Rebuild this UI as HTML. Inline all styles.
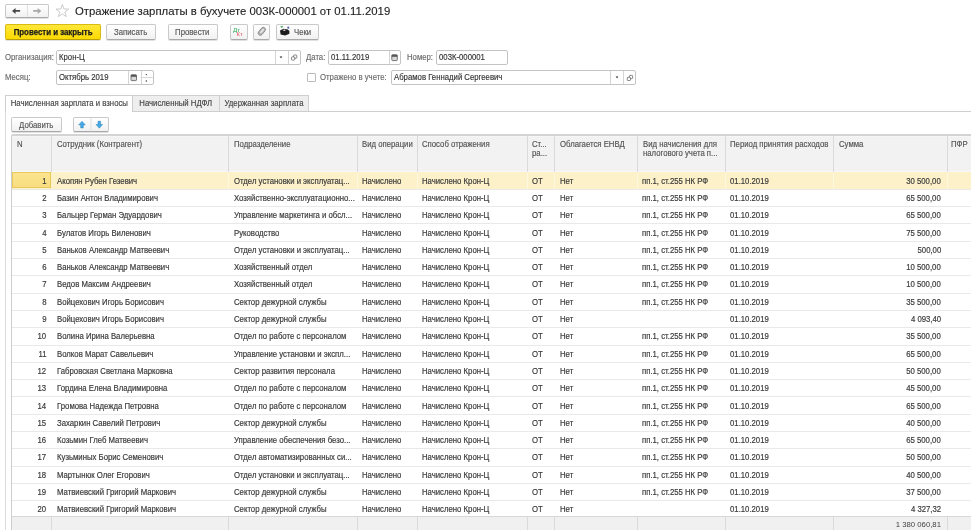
<!DOCTYPE html>
<html><head><meta charset="utf-8">
<style>
*{box-sizing:border-box;margin:0;padding:0}
html,body{width:971px;height:530px;overflow:hidden;background:#fff}
body{position:relative;font-family:"Liberation Sans",sans-serif;font-size:7.75px;color:#333}
.a{position:absolute;white-space:nowrap}
.btn{position:absolute;border:1px solid #c9c9c9;border-bottom-color:#a9a9a9;border-radius:2px;background:linear-gradient(#fff,#f1f1f1);box-shadow:0 1px 0 rgba(0,0,0,.12);color:#555;text-align:center}
.lbl{position:absolute;color:#6b6b6b;white-space:nowrap}
.inp{position:absolute;border:1px solid #c4c4c4;border-radius:2px;background:#fff;color:#333}
.inp .t{position:absolute;left:2px;white-space:nowrap}
.dv{position:absolute;top:0;bottom:0;width:1px;background:#d4d4d4}
.tab{position:absolute;border:1px solid #cfcfcf;border-bottom:none;background:#eeeeee;color:#444;text-align:center}
.row{left:11px;width:960px}
.row .c{top:0.85px;line-height:17px;color:#3a3a3a;font-size:8.25px;transform:scaleX(0.94);transform-origin:0 0;-webkit-text-stroke:0.18px #3a3a3a}
.row .r{transform-origin:100% 0}
.hd{color:#525252}
.s{display:inline-block;font-size:8.25px;transform:scaleX(.94);-webkit-text-stroke-width:0.15px}
.btn .s{position:relative;top:0.6px}
.l{transform-origin:0 50%}

</style></head><body><div id="root" style="position:absolute;left:0;top:0;width:971px;height:530px;will-change:transform">

<!-- nav -->
<div class="btn" style="left:5px;top:3.5px;width:44px;height:14.5px;border-radius:2px"></div>
<div class="a" style="left:27px;top:4.5px;width:1px;height:12.5px;background:#e0e0e0"></div>
<svg class="a" style="left:0;top:0" width="80" height="20" viewBox="0 0 80 20">
<path d="M12 10.9 L15.6 7.9 L15.6 10 L20.1 10 L20.1 11.8 L15.6 11.8 L15.6 13.9 Z" fill="#484848"/>
<path d="M41.3 10.9 L37.7 7.9 L37.7 10 L33.2 10 L33.2 11.8 L37.7 11.8 L37.7 13.9 Z" fill="#a8a8a8"/>
<path d="M62.3 4.5 L63.88 8.95 L68.66 9.12 L64.88 12.01 L66.23 16.6 L62.3 13.9 L58.37 16.6 L59.72 12.01 L55.94 9.12 L60.72 8.95 Z" fill="none" stroke="#c4c4c4" stroke-width="0.9" stroke-linejoin="round"/>
</svg>
<div class="a" style="left:75px;top:3.8px;font-size:11.35px;line-height:14px;color:#1e1e1e;-webkit-text-stroke:0.12px #1e1e1e">Отражение зарплаты в бухучете 003К-000001 от 01.11.2019</div>

<!-- toolbar -->
<div class="a" style="left:5px;top:24px;width:96px;height:15.5px;border:1px solid #d8ba10;border-bottom-color:#bba000;border-radius:2px;background:linear-gradient(#ffe73a,#fcda00);box-shadow:0 1px 0 rgba(0,0,0,.12);font-weight:bold;font-size:7.9px;color:#1a1a1a;text-align:center;line-height:14px"><span style="display:inline-block;font-size:8.6px;transform:scaleX(.915);position:relative;top:0.3px;-webkit-text-stroke:0.25px #1a1a1a">Провести и закрыть</span></div>
<div class="btn" style="left:106px;top:24px;width:49.5px;height:15.5px;line-height:14px"><span class="s">Записать</span></div>
<div class="btn" style="left:167.5px;top:24px;width:50px;height:15.5px;line-height:14px"><span class="s">Провести</span></div>
<div class="btn" style="left:229.5px;top:24px;width:18px;height:15.5px"></div>
<svg class="a" style="left:226px;top:22px" width="22" height="18" viewBox="226 22 22 18"><text x="233" y="31.7" font-family="Liberation Sans" font-size="6" fill="#2aa84e" textLength="7" lengthAdjust="spacingAndGlyphs">Дт</text><text x="236.6" y="36.3" font-family="Liberation Sans" font-size="5.8" fill="#e0505c" textLength="6.2" lengthAdjust="spacingAndGlyphs">Кт</text></svg>
<div class="btn" style="left:253.2px;top:24px;width:17.3px;height:15.5px"></div>
<svg class="a" style="left:250px;top:22px" width="24" height="18" viewBox="250 22 24 18"><g transform="rotate(40 261.8 31.3)"><rect x="259.6" y="26.8" width="4.4" height="9" rx="2.2" fill="#b4b4b4" stroke="#8e8e8e" stroke-width="0.9"/><rect x="260.9" y="28.2" width="1.8" height="5.2" rx="0.9" fill="#e6e6e6"/></g></svg>
<div class="btn" style="left:276.2px;top:24px;width:43px;height:15.5px;line-height:14px;text-align:left;padding-left:17px"><span class="s l">Чеки</span></div>
<svg class="a" style="left:274px;top:22px" width="20" height="18" viewBox="274 22 20 18"><path d="M280 30.6 L283.6 28.8 L287.8 29.4 L289.4 31 L289.4 33.8 L285.2 35.6 L280.6 34.6 Z" fill="#1c1c1c"/><path d="M282.8 30.1 L284.6 29.6 L285.8 30.3 L284 30.9Z" fill="#f0f0f0"/><path d="M280.2 26.3 L283.4 26.3 L281.8 28.1Z" fill="#2a9a48"/><circle cx="288.3" cy="27.7" r="1.1" fill="#5a63b0"/></svg>

<!-- row1 -->
<div class="lbl" style="left:5px;top:50px;line-height:15px"><span class="s l">Организация:</span></div>
<div class="inp" style="left:56px;top:50px;width:245px;height:15px">
  <div class="t" style="line-height:13px"><span class="s l">Крон-Ц</span></div>
  <div class="dv" style="left:218px"></div>
  <div class="dv" style="left:230.5px"></div>
</div>
<div class="lbl" style="left:306px;top:50px;line-height:15px"><span class="s l">Дата:</span></div>
<div class="inp" style="left:328px;top:50px;width:73px;height:15px">
  <div class="t" style="line-height:13px"><span class="s l">01.11.2019</span></div>
  <div class="dv" style="left:59.5px"></div>
</div>
<div class="lbl" style="left:407px;top:50px;line-height:15px"><span class="s l">Номер:</span></div>
<div class="inp" style="left:436px;top:50px;width:72px;height:15px">
  <div class="t" style="line-height:13px"><span class="s l">003К-000001</span></div>
</div>

<!-- row2 -->
<div class="lbl" style="left:5px;top:70px;line-height:15px"><span class="s l">Месяц:</span></div>
<div class="inp" style="left:56px;top:70px;width:98px;height:15px">
  <div class="t" style="line-height:13px"><span class="s l">Октябрь 2019</span></div>
  <div class="dv" style="left:70.5px"></div>
  <div class="dv" style="left:83.5px"></div>
</div>
<div class="a" style="left:307px;top:73px;width:9px;height:9px;border:1px solid #bbb;border-radius:1px;background:#fff"></div>
<div class="lbl" style="left:320px;top:70px;line-height:15px"><span class="s l">Отражено в учете:</span></div>
<div class="inp" style="left:391px;top:70px;width:245px;height:15px">
  <div class="t" style="line-height:13px"><span class="s l">Абрамов Геннадий Сергеевич</span></div>
  <div class="dv" style="left:218px"></div>
  <div class="dv" style="left:231px"></div>
</div>


<svg class="a" style="left:0;top:40px" width="971" height="50" viewBox="0 40 971 50">
<path d="M279.6 56.4 L282.4 56.4 L281 58.2Z" fill="#222"/>
<path d="M615.6 76.4 L618.4 76.4 L617 78.2Z" fill="#222"/>
<g fill="#fff" stroke="#666" stroke-width="0.8">
<rect x="293.6" y="55.0" width="3.2" height="3.2" rx="0.7"/><rect x="291.5" y="56.9" width="3.2" height="3.2" rx="0.7"/>
<rect x="629.4" y="75.4" width="3.2" height="3.2" rx="0.7"/><rect x="627.3" y="77.3" width="3.2" height="3.2" rx="0.7"/>
</g>
<g>
<rect x="131" y="74.8" width="5.5" height="5.8" rx="0.8" fill="#d8d8d8" stroke="#555" stroke-width="0.8"/><rect x="131" y="74.8" width="5.5" height="2" fill="#555"/>
<rect x="391.8" y="54.8" width="5.5" height="5.8" rx="0.8" fill="#d8d8d8" stroke="#555" stroke-width="0.8"/><rect x="391.8" y="54.8" width="5.5" height="2" fill="#555"/>
</g>
<circle cx="146.3" cy="74.6" r="0.7" fill="#333"/><circle cx="146.3" cy="81" r="0.7" fill="#333"/>
<rect x="140.5" y="77.2" width="12.2" height="0.8" fill="#d0d0d0"/>
</svg>


<!-- tabs -->
<div class="a" style="left:5px;top:111px;width:966px;height:1px;background:#cfcfcf"></div>
<div class="a" style="left:4.5px;top:111px;width:1.5px;height:419px;background:#dcdcdc"></div>
<div class="tab" style="left:5px;top:95px;width:128px;height:17px;background:#fff;line-height:16px;color:#444"><span class="s">Начисленная зарплата и взносы</span></div>
<div class="tab" style="left:133px;top:95px;width:87px;height:16px;line-height:16px;border-left:none"><span class="s">Начисленный НДФЛ</span></div>
<div class="tab" style="left:219px;top:95px;width:90px;height:16px;line-height:16px"><span class="s">Удержанная зарплата</span></div>

<div class="btn" style="left:11px;top:117px;width:51px;height:15px;line-height:13px"><span class="s">Добавить</span></div>
<div class="btn" style="left:73px;top:117px;width:36px;height:15px"></div>

<svg class="a" style="left:0;top:110px" width="120" height="30" viewBox="0 110 120 30">
<path d="M82 121.3 L85.3 124.9 L83.3 124.9 L83.3 127.9 L80.7 127.9 L80.7 124.9 L78.7 124.9Z" fill="#45a8e3" stroke="#2c86bd" stroke-width="0.5" stroke-linejoin="round"/>
<path d="M99.3 128.2 L102.6 124.5 L100.6 124.5 L100.6 121.2 L98 121.2 L98 124.5 L96 124.5Z" fill="#45a8e3" stroke="#2c86bd" stroke-width="0.5" stroke-linejoin="round"/>
<rect x="90.5" y="117.8" width="1" height="13.6" fill="#e0e0e0"/>
</svg>
<!--TBL-->
<div class="a" style="left:11px;top:134px;width:960px;height:37.80000000000001px;background:#f2f2f2;border-top:2px solid #d3d3d3;border-left:1px solid #cdcdcd;border-top-left-radius:2px"></div>
<div class="a" style="left:12px;top:136px;width:959px;height:1px;background:#f6f6f6"></div>
<div class="a" style="left:12px;top:170.8px;width:959px;height:1px;background:#f8f8f8"></div>
<div class="a" style="left:51px;top:136px;width:1px;height:35.80000000000001px;background:#dadada"></div>
<div class="a" style="left:228px;top:136px;width:1px;height:35.80000000000001px;background:#dadada"></div>
<div class="a" style="left:357px;top:136px;width:1px;height:35.80000000000001px;background:#dadada"></div>
<div class="a" style="left:417px;top:136px;width:1px;height:35.80000000000001px;background:#dadada"></div>
<div class="a" style="left:527px;top:136px;width:1px;height:35.80000000000001px;background:#dadada"></div>
<div class="a" style="left:554px;top:136px;width:1px;height:35.80000000000001px;background:#dadada"></div>
<div class="a" style="left:637px;top:136px;width:1px;height:35.80000000000001px;background:#dadada"></div>
<div class="a" style="left:725px;top:136px;width:1px;height:35.80000000000001px;background:#dadada"></div>
<div class="a" style="left:833px;top:136px;width:1px;height:35.80000000000001px;background:#dadada"></div>
<div class="a" style="left:947px;top:136px;width:1px;height:35.80000000000001px;background:#dadada"></div>
<div class="a hd" style="left:16.8px;top:135px;line-height:9.3px;padding-top:4.8px"><span class="s l">N</span></div>
<div class="a hd" style="left:56.8px;top:135px;line-height:9.3px;padding-top:4.8px"><span class="s l">Сотрудник (Контрагент)</span></div>
<div class="a hd" style="left:233.9px;top:135px;line-height:9.3px;padding-top:4.8px"><span class="s l">Подразделение</span></div>
<div class="a hd" style="left:362.4px;top:135px;line-height:9.3px;padding-top:4.8px"><span class="s l">Вид операции</span></div>
<div class="a hd" style="left:422.4px;top:135px;line-height:9.3px;padding-top:4.8px"><span class="s l">Способ отражения</span></div>
<div class="a hd" style="left:532.1px;top:135px;line-height:9.3px;padding-top:4.8px"><span class="s l">Ст...<br>ра...</span></div>
<div class="a hd" style="left:559.8px;top:135px;line-height:9.3px;padding-top:4.8px"><span class="s l">Облагается ЕНВД</span></div>
<div class="a hd" style="left:642.6px;top:135px;line-height:9.3px;padding-top:4.8px"><span class="s l">Вид начисления для<br>налогового учета п...</span></div>
<div class="a hd" style="left:730.4px;top:135px;line-height:9.3px;padding-top:4.8px"><span class="s l">Период принятия расходов</span></div>
<div class="a hd" style="left:838.6px;top:135px;line-height:9.3px;padding-top:4.8px"><span class="s l">Сумма</span></div>
<div class="a hd" style="left:951.1px;top:135px;line-height:9.3px;padding-top:4.8px"><span class="s l">ПФР</span></div>
<div class="a" style="left:12px;top:188.80px;width:959px;height:1px;background:#e9e9e9"></div>
<div class="a row" style="top:171.80px;height:17.3px;background:#fdf1c9">
<div class="a" style="left:0.7px;top:0.6px;width:39.3px;height:15.4px;background:linear-gradient(#fbe48e,#f9dd80);border:1px solid #eac75a"></div>
<div class="a" style="left:217px;top:0;width:1px;height:17.3px;background:#fff8e0"></div>
<div class="a" style="left:346px;top:0;width:1px;height:17.3px;background:#fff8e0"></div>
<div class="a" style="left:406px;top:0;width:1px;height:17.3px;background:#fff8e0"></div>
<div class="a" style="left:516px;top:0;width:1px;height:17.3px;background:#fff8e0"></div>
<div class="a" style="left:543px;top:0;width:1px;height:17.3px;background:#fff8e0"></div>
<div class="a" style="left:626px;top:0;width:1px;height:17.3px;background:#fff8e0"></div>
<div class="a" style="left:714px;top:0;width:1px;height:17.3px;background:#fff8e0"></div>
<div class="a" style="left:822px;top:0;width:1px;height:17.3px;background:#fff8e0"></div>
<div class="a" style="left:936px;top:0;width:1px;height:17.3px;background:#fff8e0"></div>
<div class="a c r" style="right:924.5px;text-align:right">1</div>
<div class="a c" style="left:46.2px">Акопян Рубен Гезевич</div>
<div class="a c" style="left:222.6px">Отдел установки и эксплуатац...</div>
<div class="a c" style="left:351.2px">Начислено</div>
<div class="a c" style="left:411.3px">Начислено Крон-Ц</div>
<div class="a c" style="left:521px">ОТ</div>
<div class="a c" style="left:548.5px">Нет</div>
<div class="a c" style="left:631.2px">пп.1, ст.255 НК РФ</div>
<div class="a c" style="left:719.4px">01.10.2019</div>
<div class="a c r" style="right:30px;text-align:right">30 500,00</div>
</div>
<div class="a" style="left:12px;top:206.10px;width:959px;height:1px;background:#e9e9e9"></div>
<div class="a row" style="top:189.10px;height:17.3px;background:transparent">
<div class="a c r" style="right:924.5px;text-align:right">2</div>
<div class="a c" style="left:46.2px">Базин Антон Владимирович</div>
<div class="a c" style="left:222.6px">Хозяйственно-эксплуатационно...</div>
<div class="a c" style="left:351.2px">Начислено</div>
<div class="a c" style="left:411.3px">Начислено Крон-Ц</div>
<div class="a c" style="left:521px">ОТ</div>
<div class="a c" style="left:548.5px">Нет</div>
<div class="a c" style="left:631.2px">пп.1, ст.255 НК РФ</div>
<div class="a c" style="left:719.4px">01.10.2019</div>
<div class="a c r" style="right:30px;text-align:right">65 500,00</div>
</div>
<div class="a" style="left:12px;top:223.40px;width:959px;height:1px;background:#e9e9e9"></div>
<div class="a row" style="top:206.40px;height:17.3px;background:transparent">
<div class="a c r" style="right:924.5px;text-align:right">3</div>
<div class="a c" style="left:46.2px">Бальцер Герман Эдуардович</div>
<div class="a c" style="left:222.6px">Управление маркетинга и обсл...</div>
<div class="a c" style="left:351.2px">Начислено</div>
<div class="a c" style="left:411.3px">Начислено Крон-Ц</div>
<div class="a c" style="left:521px">ОТ</div>
<div class="a c" style="left:548.5px">Нет</div>
<div class="a c" style="left:631.2px">пп.1, ст.255 НК РФ</div>
<div class="a c" style="left:719.4px">01.10.2019</div>
<div class="a c r" style="right:30px;text-align:right">65 500,00</div>
</div>
<div class="a" style="left:12px;top:240.70px;width:959px;height:1px;background:#e9e9e9"></div>
<div class="a row" style="top:223.70px;height:17.3px;background:transparent">
<div class="a c r" style="right:924.5px;text-align:right">4</div>
<div class="a c" style="left:46.2px">Булатов Игорь Виленович</div>
<div class="a c" style="left:222.6px">Руководство</div>
<div class="a c" style="left:351.2px">Начислено</div>
<div class="a c" style="left:411.3px">Начислено Крон-Ц</div>
<div class="a c" style="left:521px">ОТ</div>
<div class="a c" style="left:548.5px">Нет</div>
<div class="a c" style="left:631.2px">пп.1, ст.255 НК РФ</div>
<div class="a c" style="left:719.4px">01.10.2019</div>
<div class="a c r" style="right:30px;text-align:right">75 500,00</div>
</div>
<div class="a" style="left:12px;top:258.00px;width:959px;height:1px;background:#e9e9e9"></div>
<div class="a row" style="top:241.00px;height:17.3px;background:transparent">
<div class="a c r" style="right:924.5px;text-align:right">5</div>
<div class="a c" style="left:46.2px">Ваньков Александр Матвеевич</div>
<div class="a c" style="left:222.6px">Отдел установки и эксплуатац...</div>
<div class="a c" style="left:351.2px">Начислено</div>
<div class="a c" style="left:411.3px">Начислено Крон-Ц</div>
<div class="a c" style="left:521px">ОТ</div>
<div class="a c" style="left:548.5px">Нет</div>
<div class="a c" style="left:631.2px">пп.1, ст.255 НК РФ</div>
<div class="a c" style="left:719.4px">01.10.2019</div>
<div class="a c r" style="right:30px;text-align:right">500,00</div>
</div>
<div class="a" style="left:12px;top:275.30px;width:959px;height:1px;background:#e9e9e9"></div>
<div class="a row" style="top:258.30px;height:17.3px;background:transparent">
<div class="a c r" style="right:924.5px;text-align:right">6</div>
<div class="a c" style="left:46.2px">Ваньков Александр Матвеевич</div>
<div class="a c" style="left:222.6px">Хозяйственный отдел</div>
<div class="a c" style="left:351.2px">Начислено</div>
<div class="a c" style="left:411.3px">Начислено Крон-Ц</div>
<div class="a c" style="left:521px">ОТ</div>
<div class="a c" style="left:548.5px">Нет</div>
<div class="a c" style="left:631.2px">пп.1, ст.255 НК РФ</div>
<div class="a c" style="left:719.4px">01.10.2019</div>
<div class="a c r" style="right:30px;text-align:right">10 500,00</div>
</div>
<div class="a" style="left:12px;top:292.60px;width:959px;height:1px;background:#e9e9e9"></div>
<div class="a row" style="top:275.60px;height:17.3px;background:transparent">
<div class="a c r" style="right:924.5px;text-align:right">7</div>
<div class="a c" style="left:46.2px">Ведов Максим Андреевич</div>
<div class="a c" style="left:222.6px">Хозяйственный отдел</div>
<div class="a c" style="left:351.2px">Начислено</div>
<div class="a c" style="left:411.3px">Начислено Крон-Ц</div>
<div class="a c" style="left:521px">ОТ</div>
<div class="a c" style="left:548.5px">Нет</div>
<div class="a c" style="left:631.2px">пп.1, ст.255 НК РФ</div>
<div class="a c" style="left:719.4px">01.10.2019</div>
<div class="a c r" style="right:30px;text-align:right">10 500,00</div>
</div>
<div class="a" style="left:12px;top:309.90px;width:959px;height:1px;background:#e9e9e9"></div>
<div class="a row" style="top:292.90px;height:17.3px;background:transparent">
<div class="a c r" style="right:924.5px;text-align:right">8</div>
<div class="a c" style="left:46.2px">Войцехович Игорь Борисович</div>
<div class="a c" style="left:222.6px">Сектор дежурной службы</div>
<div class="a c" style="left:351.2px">Начислено</div>
<div class="a c" style="left:411.3px">Начислено Крон-Ц</div>
<div class="a c" style="left:521px">ОТ</div>
<div class="a c" style="left:548.5px">Нет</div>
<div class="a c" style="left:631.2px">пп.1, ст.255 НК РФ</div>
<div class="a c" style="left:719.4px">01.10.2019</div>
<div class="a c r" style="right:30px;text-align:right">35 500,00</div>
</div>
<div class="a" style="left:12px;top:327.20px;width:959px;height:1px;background:#e9e9e9"></div>
<div class="a row" style="top:310.20px;height:17.3px;background:transparent">
<div class="a c r" style="right:924.5px;text-align:right">9</div>
<div class="a c" style="left:46.2px">Войцехович Игорь Борисович</div>
<div class="a c" style="left:222.6px">Сектор дежурной службы</div>
<div class="a c" style="left:351.2px">Начислено</div>
<div class="a c" style="left:411.3px">Начислено Крон-Ц</div>
<div class="a c" style="left:521px">ОТ</div>
<div class="a c" style="left:548.5px">Нет</div>
<div class="a c" style="left:719.4px">01.10.2019</div>
<div class="a c r" style="right:30px;text-align:right">4 093,40</div>
</div>
<div class="a" style="left:12px;top:344.50px;width:959px;height:1px;background:#e9e9e9"></div>
<div class="a row" style="top:327.50px;height:17.3px;background:transparent">
<div class="a c r" style="right:924.5px;text-align:right">10</div>
<div class="a c" style="left:46.2px">Волина Ирина Валерьевна</div>
<div class="a c" style="left:222.6px">Отдел по работе с персоналом</div>
<div class="a c" style="left:351.2px">Начислено</div>
<div class="a c" style="left:411.3px">Начислено Крон-Ц</div>
<div class="a c" style="left:521px">ОТ</div>
<div class="a c" style="left:548.5px">Нет</div>
<div class="a c" style="left:631.2px">пп.1, ст.255 НК РФ</div>
<div class="a c" style="left:719.4px">01.10.2019</div>
<div class="a c r" style="right:30px;text-align:right">35 500,00</div>
</div>
<div class="a" style="left:12px;top:361.80px;width:959px;height:1px;background:#e9e9e9"></div>
<div class="a row" style="top:344.80px;height:17.3px;background:transparent">
<div class="a c r" style="right:924.5px;text-align:right">11</div>
<div class="a c" style="left:46.2px">Волков Марат Савельевич</div>
<div class="a c" style="left:222.6px">Управление установки и экспл...</div>
<div class="a c" style="left:351.2px">Начислено</div>
<div class="a c" style="left:411.3px">Начислено Крон-Ц</div>
<div class="a c" style="left:521px">ОТ</div>
<div class="a c" style="left:548.5px">Нет</div>
<div class="a c" style="left:631.2px">пп.1, ст.255 НК РФ</div>
<div class="a c" style="left:719.4px">01.10.2019</div>
<div class="a c r" style="right:30px;text-align:right">65 500,00</div>
</div>
<div class="a" style="left:12px;top:379.10px;width:959px;height:1px;background:#e9e9e9"></div>
<div class="a row" style="top:362.10px;height:17.3px;background:transparent">
<div class="a c r" style="right:924.5px;text-align:right">12</div>
<div class="a c" style="left:46.2px">Габровская Светлана Марковна</div>
<div class="a c" style="left:222.6px">Сектор развития персонала</div>
<div class="a c" style="left:351.2px">Начислено</div>
<div class="a c" style="left:411.3px">Начислено Крон-Ц</div>
<div class="a c" style="left:521px">ОТ</div>
<div class="a c" style="left:548.5px">Нет</div>
<div class="a c" style="left:631.2px">пп.1, ст.255 НК РФ</div>
<div class="a c" style="left:719.4px">01.10.2019</div>
<div class="a c r" style="right:30px;text-align:right">50 500,00</div>
</div>
<div class="a" style="left:12px;top:396.40px;width:959px;height:1px;background:#e9e9e9"></div>
<div class="a row" style="top:379.40px;height:17.3px;background:transparent">
<div class="a c r" style="right:924.5px;text-align:right">13</div>
<div class="a c" style="left:46.2px">Гордина Елена Владимировна</div>
<div class="a c" style="left:222.6px">Отдел по работе с персоналом</div>
<div class="a c" style="left:351.2px">Начислено</div>
<div class="a c" style="left:411.3px">Начислено Крон-Ц</div>
<div class="a c" style="left:521px">ОТ</div>
<div class="a c" style="left:548.5px">Нет</div>
<div class="a c" style="left:631.2px">пп.1, ст.255 НК РФ</div>
<div class="a c" style="left:719.4px">01.10.2019</div>
<div class="a c r" style="right:30px;text-align:right">45 500,00</div>
</div>
<div class="a" style="left:12px;top:413.70px;width:959px;height:1px;background:#e9e9e9"></div>
<div class="a row" style="top:396.70px;height:17.3px;background:transparent">
<div class="a c r" style="right:924.5px;text-align:right">14</div>
<div class="a c" style="left:46.2px">Громова Надежда Петровна</div>
<div class="a c" style="left:222.6px">Отдел по работе с персоналом</div>
<div class="a c" style="left:351.2px">Начислено</div>
<div class="a c" style="left:411.3px">Начислено Крон-Ц</div>
<div class="a c" style="left:521px">ОТ</div>
<div class="a c" style="left:548.5px">Нет</div>
<div class="a c" style="left:631.2px">пп.1, ст.255 НК РФ</div>
<div class="a c" style="left:719.4px">01.10.2019</div>
<div class="a c r" style="right:30px;text-align:right">65 500,00</div>
</div>
<div class="a" style="left:12px;top:431.00px;width:959px;height:1px;background:#e9e9e9"></div>
<div class="a row" style="top:414.00px;height:17.3px;background:transparent">
<div class="a c r" style="right:924.5px;text-align:right">15</div>
<div class="a c" style="left:46.2px">Захаркин Савелий Петрович</div>
<div class="a c" style="left:222.6px">Сектор дежурной службы</div>
<div class="a c" style="left:351.2px">Начислено</div>
<div class="a c" style="left:411.3px">Начислено Крон-Ц</div>
<div class="a c" style="left:521px">ОТ</div>
<div class="a c" style="left:548.5px">Нет</div>
<div class="a c" style="left:631.2px">пп.1, ст.255 НК РФ</div>
<div class="a c" style="left:719.4px">01.10.2019</div>
<div class="a c r" style="right:30px;text-align:right">40 500,00</div>
</div>
<div class="a" style="left:12px;top:448.30px;width:959px;height:1px;background:#e9e9e9"></div>
<div class="a row" style="top:431.30px;height:17.3px;background:transparent">
<div class="a c r" style="right:924.5px;text-align:right">16</div>
<div class="a c" style="left:46.2px">Козьмин Глеб Матвеевич</div>
<div class="a c" style="left:222.6px">Управление обеспечения безо...</div>
<div class="a c" style="left:351.2px">Начислено</div>
<div class="a c" style="left:411.3px">Начислено Крон-Ц</div>
<div class="a c" style="left:521px">ОТ</div>
<div class="a c" style="left:548.5px">Нет</div>
<div class="a c" style="left:631.2px">пп.1, ст.255 НК РФ</div>
<div class="a c" style="left:719.4px">01.10.2019</div>
<div class="a c r" style="right:30px;text-align:right">65 500,00</div>
</div>
<div class="a" style="left:12px;top:465.60px;width:959px;height:1px;background:#e9e9e9"></div>
<div class="a row" style="top:448.60px;height:17.3px;background:transparent">
<div class="a c r" style="right:924.5px;text-align:right">17</div>
<div class="a c" style="left:46.2px">Кузьминых Борис Семенович</div>
<div class="a c" style="left:222.6px">Отдел автоматизированных си...</div>
<div class="a c" style="left:351.2px">Начислено</div>
<div class="a c" style="left:411.3px">Начислено Крон-Ц</div>
<div class="a c" style="left:521px">ОТ</div>
<div class="a c" style="left:548.5px">Нет</div>
<div class="a c" style="left:631.2px">пп.1, ст.255 НК РФ</div>
<div class="a c" style="left:719.4px">01.10.2019</div>
<div class="a c r" style="right:30px;text-align:right">50 500,00</div>
</div>
<div class="a" style="left:12px;top:482.90px;width:959px;height:1px;background:#e9e9e9"></div>
<div class="a row" style="top:465.90px;height:17.3px;background:transparent">
<div class="a c r" style="right:924.5px;text-align:right">18</div>
<div class="a c" style="left:46.2px">Мартынюк Олег Егорович</div>
<div class="a c" style="left:222.6px">Отдел установки и эксплуатац...</div>
<div class="a c" style="left:351.2px">Начислено</div>
<div class="a c" style="left:411.3px">Начислено Крон-Ц</div>
<div class="a c" style="left:521px">ОТ</div>
<div class="a c" style="left:548.5px">Нет</div>
<div class="a c" style="left:631.2px">пп.1, ст.255 НК РФ</div>
<div class="a c" style="left:719.4px">01.10.2019</div>
<div class="a c r" style="right:30px;text-align:right">40 500,00</div>
</div>
<div class="a" style="left:12px;top:500.20px;width:959px;height:1px;background:#e9e9e9"></div>
<div class="a row" style="top:483.20px;height:17.3px;background:transparent">
<div class="a c r" style="right:924.5px;text-align:right">19</div>
<div class="a c" style="left:46.2px">Матвиевский Григорий Маркович</div>
<div class="a c" style="left:222.6px">Сектор дежурной службы</div>
<div class="a c" style="left:351.2px">Начислено</div>
<div class="a c" style="left:411.3px">Начислено Крон-Ц</div>
<div class="a c" style="left:521px">ОТ</div>
<div class="a c" style="left:548.5px">Нет</div>
<div class="a c" style="left:631.2px">пп.1, ст.255 НК РФ</div>
<div class="a c" style="left:719.4px">01.10.2019</div>
<div class="a c r" style="right:30px;text-align:right">37 500,00</div>
</div>
<div class="a" style="left:12px;top:517.50px;width:959px;height:1px;background:#e9e9e9"></div>
<div class="a row" style="top:500.50px;height:17.3px;background:transparent">
<div class="a c r" style="right:924.5px;text-align:right">20</div>
<div class="a c" style="left:46.2px">Матвиевский Григорий Маркович</div>
<div class="a c" style="left:222.6px">Сектор дежурной службы</div>
<div class="a c" style="left:351.2px">Начислено</div>
<div class="a c" style="left:411.3px">Начислено Крон-Ц</div>
<div class="a c" style="left:521px">ОТ</div>
<div class="a c" style="left:548.5px">Нет</div>
<div class="a c" style="left:719.4px">01.10.2019</div>
<div class="a c r" style="right:30px;text-align:right">4 327,32</div>
</div>
<div class="a" style="left:11px;top:515.90px;width:960px;height:14.10px;background:#f0f0f0;border-top:1px solid #d8d8d8;border-left:1px solid #cdcdcd"></div>
<div class="a" style="left:51px;top:516.90px;width:1px;height:20px;background:#dadada"></div>
<div class="a" style="left:228px;top:516.90px;width:1px;height:20px;background:#dadada"></div>
<div class="a" style="left:357px;top:516.90px;width:1px;height:20px;background:#dadada"></div>
<div class="a" style="left:417px;top:516.90px;width:1px;height:20px;background:#dadada"></div>
<div class="a" style="left:527px;top:516.90px;width:1px;height:20px;background:#dadada"></div>
<div class="a" style="left:554px;top:516.90px;width:1px;height:20px;background:#dadada"></div>
<div class="a" style="left:637px;top:516.90px;width:1px;height:20px;background:#dadada"></div>
<div class="a" style="left:725px;top:516.90px;width:1px;height:20px;background:#dadada"></div>
<div class="a" style="left:833px;top:516.90px;width:1px;height:20px;background:#dadada"></div>
<div class="a" style="left:947px;top:516.90px;width:1px;height:20px;background:#dadada"></div>
<div class="a" style="right:30px;top:515.90px;line-height:17px;text-align:right;color:#444">1 380 060,81</div>
<div class="a" style="left:11px;top:171.8px;width:1px;height:344.10px;background:#cdcdcd"></div>
<!--/TBL-->
</div></body></html>
